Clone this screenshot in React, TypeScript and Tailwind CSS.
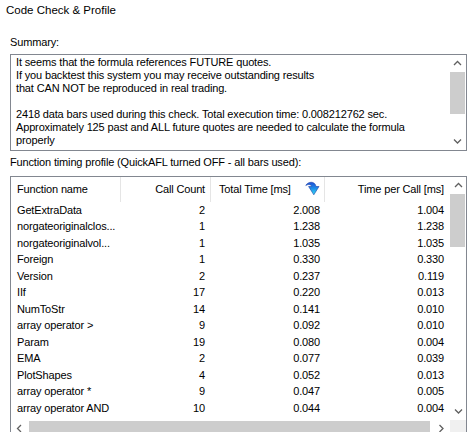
import React from "react";

const rows: [string, string, string, string][] = [
  ["GetExtraData", "2", "2.008", "1.004"],
  ["norgateoriginalclos...", "1", "1.238", "1.238"],
  ["norgateoriginalvol...", "1", "1.035", "1.035"],
  ["Foreign", "1", "0.330", "0.330"],
  ["Version", "2", "0.237", "0.119"],
  ["IIf", "17", "0.220", "0.013"],
  ["NumToStr", "14", "0.141", "0.010"],
  ["array operator >", "9", "0.092", "0.010"],
  ["Param", "19", "0.080", "0.004"],
  ["EMA", "2", "0.077", "0.039"],
  ["PlotShapes", "4", "0.052", "0.013"],
  ["array operator *", "9", "0.047", "0.005"],
  ["array operator AND", "10", "0.044", "0.004"],
];

const Chevron = ({ dir }: { dir: "up" | "down" | "left" | "right" }) => {
  const d =
    dir === "up"
      ? "M1 5 L4.5 1.5 L8 5"
      : dir === "down"
      ? "M1 1.5 L4.5 5 L8 1.5"
      : dir === "left"
      ? "M5 1 L1.5 4.5 L5 8"
      : "M1.5 1 L5 4.5 L1.5 8";
  const w = dir === "up" || dir === "down" ? 9 : 7;
  const h = dir === "up" || dir === "down" ? 7 : 9;
  return (
    <svg width={w} height={h} viewBox={`0 0 ${w} ${h}`}>
      <path d={d} fill="none" stroke="#606060" strokeWidth="1.3" />
    </svg>
  );
};

const SortIcon = () => (
  <svg width="15" height="15" viewBox="0 0 15 15">
    <defs>
      <linearGradient id="sg" x1="0" y1="0" x2="0" y2="1">
        <stop offset="0" stopColor="#1f4fd6" />
        <stop offset="0.5" stopColor="#1d8fe8" />
        <stop offset="1" stopColor="#38e4f4" />
      </linearGradient>
    </defs>
    <path
      d="M0.8 4.5 C2.5 0.5 10 -0.5 11 5.5 L14 5.5 L8.8 13.8 L3.6 5.5 L6.6 5.5 C6.3 3.5 3.5 2.8 0.8 4.5 Z"
      fill="url(#sg)"
      stroke="#1a3fa8"
      strokeWidth="0.6"
    />
  </svg>
);

export default function App() {
  return (
    <div
      className="relative w-[473px] h-[432px] overflow-hidden bg-white text-black text-[11px] leading-[13px] tracking-[-0.15px]"
      style={{ fontFamily: '"Liberation Sans", Arial, sans-serif' }}
    >
      <div className="pl-[6px] pt-[3px] h-[18px] text-[11.5px] leading-[14px] tracking-normal">Code Check &amp; Profile</div>

      <div className="mt-[18px] pl-[10px] h-[13px]">Summary:</div>

      <div className="mt-[5px] ml-[10px] w-[457px] h-[97px] border border-[#828790] flex">
        <div className="flex-1 pl-[5px] pt-[1px]">
          <div>It seems that the formula references FUTURE quotes.</div>
          <div>If you backtest this system you may receive outstanding results</div>
          <div>that CAN NOT be reproduced in real trading.</div>
          <div className="h-[13px]"></div>
          <div>2418 data bars used during this check. Total execution time: 0.008212762 sec.</div>
          <div>Approximately 125 past and ALL future quotes are needed to calculate the formula</div>
          <div>properly</div>
        </div>
        <div className="w-[17px] flex flex-col">
          <div className="h-[17px] flex items-center justify-center">
            <Chevron dir="up" />
          </div>
          <div className="flex-1 pl-[1px]">
            <div className="h-[42px] w-[15px] bg-[#cdcdcd]"></div>
          </div>
          <div className="h-[17px] flex items-center justify-center">
            <Chevron dir="down" />
          </div>
        </div>
      </div>

      <div className="mt-[5px] pl-[10px] h-[13px]">Function timing profile (QuickAFL turned OFF - all bars used):</div>

      <div className="mt-[7px] ml-[10px] w-[457px] h-[262px] border border-[#828790] flex">
        <div className="w-[439px] flex flex-col">
          <div className="flex-1 overflow-hidden">
            <div className="flex h-[25px] items-center">
              <div className="w-[110px] h-full flex items-center pl-[6px] border-r border-[#e5e5e5]">Function name</div>
              <div className="w-[90px] h-full flex items-center justify-end pr-[5px] border-r border-[#e5e5e5]">Call Count</div>
              <div className="w-[114px] h-full flex items-center pl-[8px] border-r border-[#e5e5e5]">
                <span>Total Time [ms]</span>
                <span className="ml-[14px] mt-[-2px] flex">
                  <SortIcon />
                </span>
              </div>
              <div className="w-[124px] h-full flex items-center justify-end pr-[5px]">Time per Call [ms]</div>
            </div>
            {rows.map((r, i) => (
              <div key={i} className="flex h-[16.5px] items-center">
                <div className="w-[110px] pl-[6px] whitespace-nowrap">{r[0]}</div>
                <div className="w-[90px] text-right pr-[6px]">{r[1]}</div>
                <div className="w-[114px] text-right pr-[5px]">{r[2]}</div>
                <div className="w-[124px] text-right pr-[5px]">{r[3]}</div>
              </div>
            ))}
          </div>
          <div className="h-[17px] flex items-center">
            <div className="w-[17px] h-full flex items-center justify-center">
              <Chevron dir="left" />
            </div>
            <div className="flex-1 h-full pt-[1px]">
              <div className="ml-[1px] w-[401px] h-[15px] bg-[#cdcdcd]"></div>
            </div>
            <div className="w-[17px] h-full flex items-center justify-center">
              <Chevron dir="right" />
            </div>
          </div>
        </div>
        <div className="w-[16px] flex flex-col">
          <div className="h-[17px] flex items-center justify-center">
            <Chevron dir="up" />
          </div>
          <div className="flex-1">
            <div className="h-[53px] w-[15px] bg-[#cdcdcd]"></div>
          </div>
          <div className="h-[17px] flex items-center justify-center">
            <Chevron dir="down" />
          </div>
          <div className="h-[17px] bg-[#f0f0f0]"></div>
        </div>
      </div>
    </div>
  );
}
